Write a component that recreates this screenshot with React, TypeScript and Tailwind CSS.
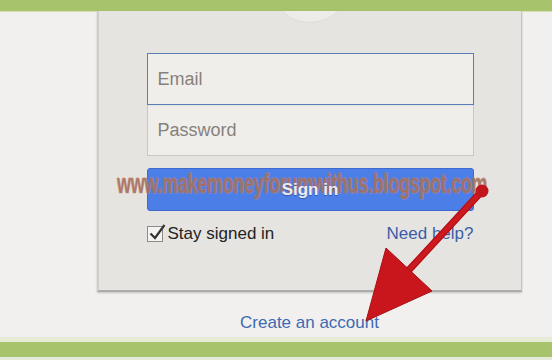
import React from "react";

export default function App() {
  return (
    <div className="relative w-[552px] h-[360px] overflow-hidden bg-[#f1f0ee] flex flex-col font-['Liberation_Sans',Arial,sans-serif]">
      <div className="h-[12px] shrink-0 bg-[#a7c36b] border-b border-[#d5e0b5]" />
      <div className="ml-[97px] w-[425px] h-[281px] -mt-px shrink-0 bg-[#e6e4e0] border-l-2 border-r border-b-2 border-l-[#cfcdc9] border-r-[#c6c4c0] border-b-[#adaba8] shadow-[0_1px_2px_rgba(0,0,0,0.2)] flex flex-col items-center overflow-hidden">
        <div className="w-[80px] h-[80px] shrink-0 -mt-[69px] rounded-full bg-[#edece9] shadow-[0_1px_1px_rgba(0,0,0,0.04)]" />
        <div className="mt-[31px] w-[327px] h-[52px] border border-[#5a7cb8] bg-[#efeeeb] flex items-center px-[10px] text-[18px] text-[#87817c]">
          Email
        </div>
        <div className="w-[327px] h-[51px] border-x border-b border-[#cac8c4] bg-[#efeeeb] shadow-[inset_0_1px_1px_rgba(0,0,0,0.04)] flex items-center px-[10px] text-[18px] text-[#87817c]">
          Password
        </div>
        <div className="mt-[12px] w-[327px] h-[43px] rounded-[3px] bg-[#4b7ee7] border border-[#3e69cf] flex items-center justify-center">
          <span className="relative z-[2] text-[#eeecf0] font-bold text-[17px] [text-shadow:0_1px_1px_rgba(0,0,0,0.3)]">Sign in</span>
        </div>
        <div className="mt-[14px] w-[327px] h-[18px] flex items-center justify-between text-[17px]">
          <div className="flex items-center">
            <div className="relative w-[16px] h-[16px] border border-[#8d8b88] bg-[#f4f3f1]">
              <svg className="absolute -top-[4px] left-[0px]" width="20" height="20" viewBox="0 0 20 20">
                <path d="M2.5 10.5 L7 15 L16.5 2" fill="none" stroke="#333" strokeWidth="2.2" />
              </svg>
            </div>
            <span className="ml-[5px] text-[#222]">Stay signed in</span>
          </div>
          <span className="text-[#3a5ea8]">Need help?</span>
        </div>
      </div>
      <div className="mt-[21px] h-[20px] leading-[20px] w-[552px] flex justify-center">
        <span className="ml-[67px] text-[17px] text-[#3d6ab2]">Create an account</span>
      </div>
      <div className="mt-auto shrink-0">
        <div className="h-[5px] bg-[#e6ecd6]" />
        <div className="h-[15px] bg-[#a7c36b]" />
        <div className="h-[3px] bg-[#e4eada]" />
      </div>

      <div className="absolute z-[1] left-[117px] top-[168px] origin-left scale-x-[0.66] whitespace-nowrap font-bold text-[27px] leading-[32px] tracking-[-0.3px] text-[rgba(130,100,80,0.6)] [text-shadow:1px_0_0_rgba(225,140,125,0.35),-1px_0_0_rgba(225,140,125,0.35),0_1px_0_rgba(225,140,125,0.35),0_-1px_0_rgba(225,140,125,0.35)]">
        www.makemoneyforumwithus.blogspot.com
      </div>

      <svg className="absolute z-[3] left-0 top-0 pointer-events-none" width="552" height="360" viewBox="0 0 552 360">
        <line x1="482" y1="191" x2="408" y2="271" stroke="#b30f15" strokeWidth="7" strokeLinecap="round" />
        <line x1="482" y1="191" x2="408" y2="271" stroke="#cc1a1f" strokeWidth="4.5" strokeLinecap="round" />
        <circle cx="482" cy="191" r="6.5" fill="#c0161c" />
        <polygon points="366,321 386,248 432,291" fill="#c8161c" stroke="#a90f14" strokeWidth="1" strokeLinejoin="round" />
      </svg>
    </div>
  );
}
